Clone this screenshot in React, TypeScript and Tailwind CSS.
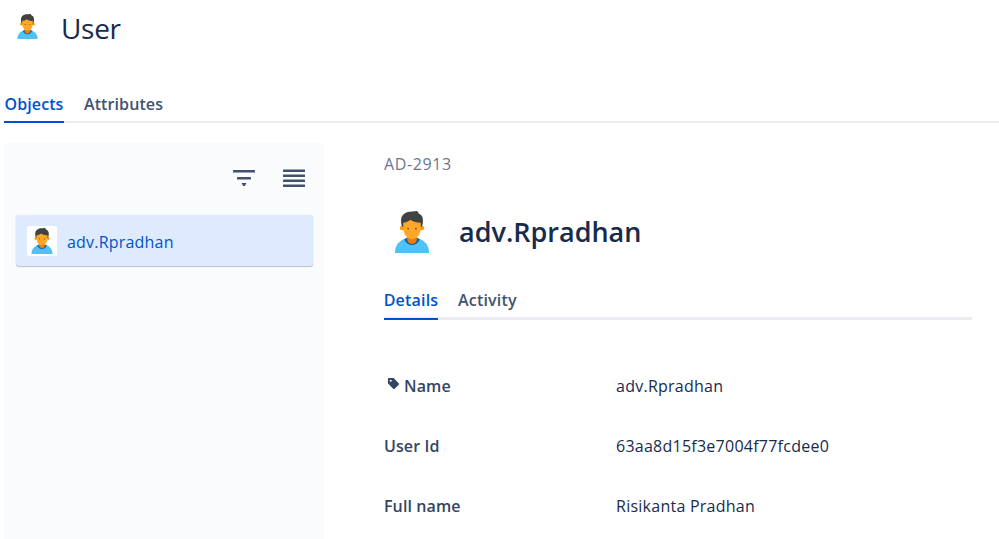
import React from "react";

function UserIcon({ size, className }: { size: number; className?: string }) {
  return (
    <svg width={size} height={size} viewBox="0 0 48 48" className={"block " + (className || "")}>
      <path d="M4.5 48c0-9 5-14 12-16.5h15C38.500 34 43.500 39 43.500 48z" fill="#4fc3f7" />
      <path d="M15 32.500c2 4.500 5.500 6.500 9 6.500s7-2 9-6.500l-3-2H18z" fill="#1565a8" />
      <path d="M18.500 25h11v7c0 3-2.500 5.500-5.500 5.500s-5.500-2.500-5.500-5.500z" fill="#f57c00" />
      <circle cx="12.500" cy="19.500" r="2.500" fill="#ff9800" />
      <circle cx="35.500" cy="19.500" r="2.500" fill="#ff9800" />
      <path d="M13.500 17c0-7 4-11 10.500-11s10.500 4 10.500 11c0 8-4.500 15-10.500 15s-10.500-7-10.500-15z" fill="#ffa726" />
      <path d="M24 0.500c-7 0-12.500 3.500-12.500 10 0 3 .3 5 1 7l1.500 1v-5c3-.5 6-1.500 8-3.500 3 2 7.500 3.500 12 3.500v5l1.500-1c.7-2 1-4 1-7 0-4-1.500-6.500-4.500-7.500l-2-3z" fill="#424242" />
      <circle cx="19.500" cy="20" r="1" fill="#784719" />
      <circle cx="28.500" cy="20" r="1" fill="#784719" />
    </svg>
  );
}

function Row({ label, value, tag }: { label: string; value: string; tag?: boolean }) {
  return (
    <div className="flex h-[60px] items-center">
      <div className="flex w-[232px] items-center text-[16px] font-semibold tracking-[0.1px] text-[#344563]">
        {tag && (
          <svg width="13" height="13" viewBox="0 0 14 14" className="mr-[4px] ml-[3px] mb-[5px]">
            <path d="M1 2.200C1 1.500 1.500 1 2.200 1h4.200c.4 0 .7.1 1 .4l5.200 5.200c.5.5.5 1.200 0 1.700l-4.300 4.300c-.5.5-1.200.5-1.700 0L1.400 7.400c-.3-.3-.4-.6-.4-1z" fill="#344563" />
            <circle cx="4" cy="4" r="1.100" fill="#fff" />
          </svg>
        )}
        {label}
      </div>
      <div className="text-[16px] tracking-[0.25px] text-[#172b4d]">{value}</div>
    </div>
  );
}

export default function App() {
  return (
    <div className="h-[539px] w-[999px] overflow-hidden bg-white font-['Open_Sans',sans-serif]">
      <div className="flex h-[58px] items-center pl-[15px]">
        <UserIcon size={25} className="mb-[5px]" />
        <h1 className="mb-[2px] ml-[21px] text-[28px] font-normal tracking-[-0.3px] text-[#172b4d]">User</h1>
      </div>

      <div className="mt-[32px] ml-[4px] flex h-[33px] gap-5 border-b-2 border-[#ebecf0] pt-[2px] text-[16px] font-semibold tracking-[0.1px]">
        <div className="-mb-[2px] flex w-[60px] justify-center border-b-2 border-[#0052cc] text-[#0052cc]">Objects</div>
        <div className="text-[#42526e]">Attributes</div>
      </div>

      <div className="mt-[20px] flex">
        <div className="ml-[4px] h-[400px] w-[320px] rounded-[3px] bg-[#fafbfc] px-[12px]">
          <div className="flex h-[72px] items-center justify-end gap-[28px] pr-[7px] pb-[2px]">
            <svg width="22" height="18" viewBox="0 0 22 18">
              <rect x="0" y="1" width="22" height="2.600" rx="0.6" fill="#42526e" />
              <rect x="4" y="8" width="14" height="2.600" rx="0.6" fill="#42526e" />
              <path d="M8.500 14h5l-1.700 3h-1.600z" fill="#42526e" />
            </svg>
            <svg width="22" height="18" viewBox="0 0 22 18">
              <rect x="0" y="0.500" width="22" height="2.500" rx="0.5" fill="#42526e" />
              <rect x="0" y="5.500" width="22" height="2.500" rx="0.5" fill="#42526e" />
              <rect x="0" y="10.500" width="22" height="2.500" rx="0.5" fill="#42526e" />
              <rect x="0" y="15.500" width="22" height="2.500" rx="0.5" fill="#42526e" />
            </svg>
          </div>
          <div className="flex h-[51px] w-[297px] items-center rounded-[3px] bg-[#deebff] pl-[11px] shadow-[0_1px_1px_rgba(9,30,66,0.25),0_0_1px_rgba(9,30,66,0.2)]">
            <div className="flex h-[30px] w-[30px] items-center justify-center rounded-[2px] bg-white">
              <UserIcon size={26} />
            </div>
            <span className="ml-[10px] pt-[2px] text-[16px] tracking-[0.2px] text-[#0052cc]">adv.Rpradhan</span>
          </div>
        </div>

        <div className="ml-[60px] w-[588px]">
          <div className="pt-[9px] text-[16px] leading-[24px] tracking-[0.6px] text-[#6b778c]">AD-2913</div>
          <div className="mt-[35px] flex items-center pl-[7px]">
            <UserIcon size={42} />
            <h2 className="ml-[26px] text-[27px] font-semibold text-[#172b4d]">adv.Rpradhan</h2>
          </div>
          <div className="mt-[35px] flex h-[32px] gap-5 border-b-[3px] border-[#ebecf0] text-[16px] font-semibold tracking-[0.2px]">
            <div className="-mb-[3px] flex w-[54px] justify-center border-b-2 border-[#0052cc] text-[#0052cc]">Details</div>
            <div className="text-[#42526e]">Activity</div>
          </div>
          <div className="mt-[36px]">
            <Row label="Name" value="adv.Rpradhan" tag />
            <Row label="User Id" value="63aa8d15f3e7004f77fcdee0" />
            <Row label="Full name" value="Risikanta Pradhan" />
          </div>
        </div>
      </div>
    </div>
  );
}
